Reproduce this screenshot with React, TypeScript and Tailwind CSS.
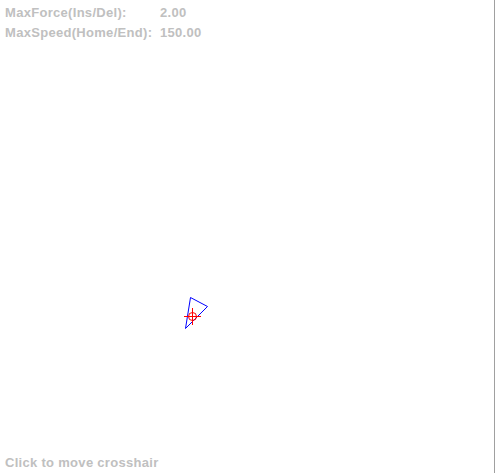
export default function App() {
  const rows = [
    { label: 'MaxForce(Ins/Del):', value: '2.00' },
    { label: 'MaxSpeed(Home/End):', value: '150.00' },
  ]

  return (
    <div className="relative flex h-[473px] w-[495px] flex-col justify-between overflow-hidden border-r border-[#a0a0a0] bg-white font-['Liberation_Sans',Arial,sans-serif] text-[13px] font-bold leading-[20px] tracking-[0.3px] text-[#c0c0c0]">
      {/* Readout */}
      <div className="grid grid-cols-[155px_auto] pl-[5px] pt-[3px]">
        {rows.map((row) => (
          <div key={row.label} className="contents">
            <span>{row.label}</span>
            <span>{row.value}</span>
          </div>
        ))}
      </div>

      {/* Canvas: agent and crosshair */}
      <svg className="absolute left-0 top-0" width="495" height="473" viewBox="0 0 495 473">
        <polygon points="190.5,297.5 207.5,306.5 185.5,328.5" fill="none" stroke="#0000ff" strokeWidth="1" />
        <g stroke="#ff0000" strokeWidth="1" fill="none">
          <circle cx="192.5" cy="316.5" r="4" />
          <line x1="184" y1="316.5" x2="201" y2="316.5" />
          <line x1="192.5" y1="308" x2="192.5" y2="325" />
        </g>
      </svg>

      <div className="pl-[5px]">Click to move crosshair</div>
    </div>
  )
}
